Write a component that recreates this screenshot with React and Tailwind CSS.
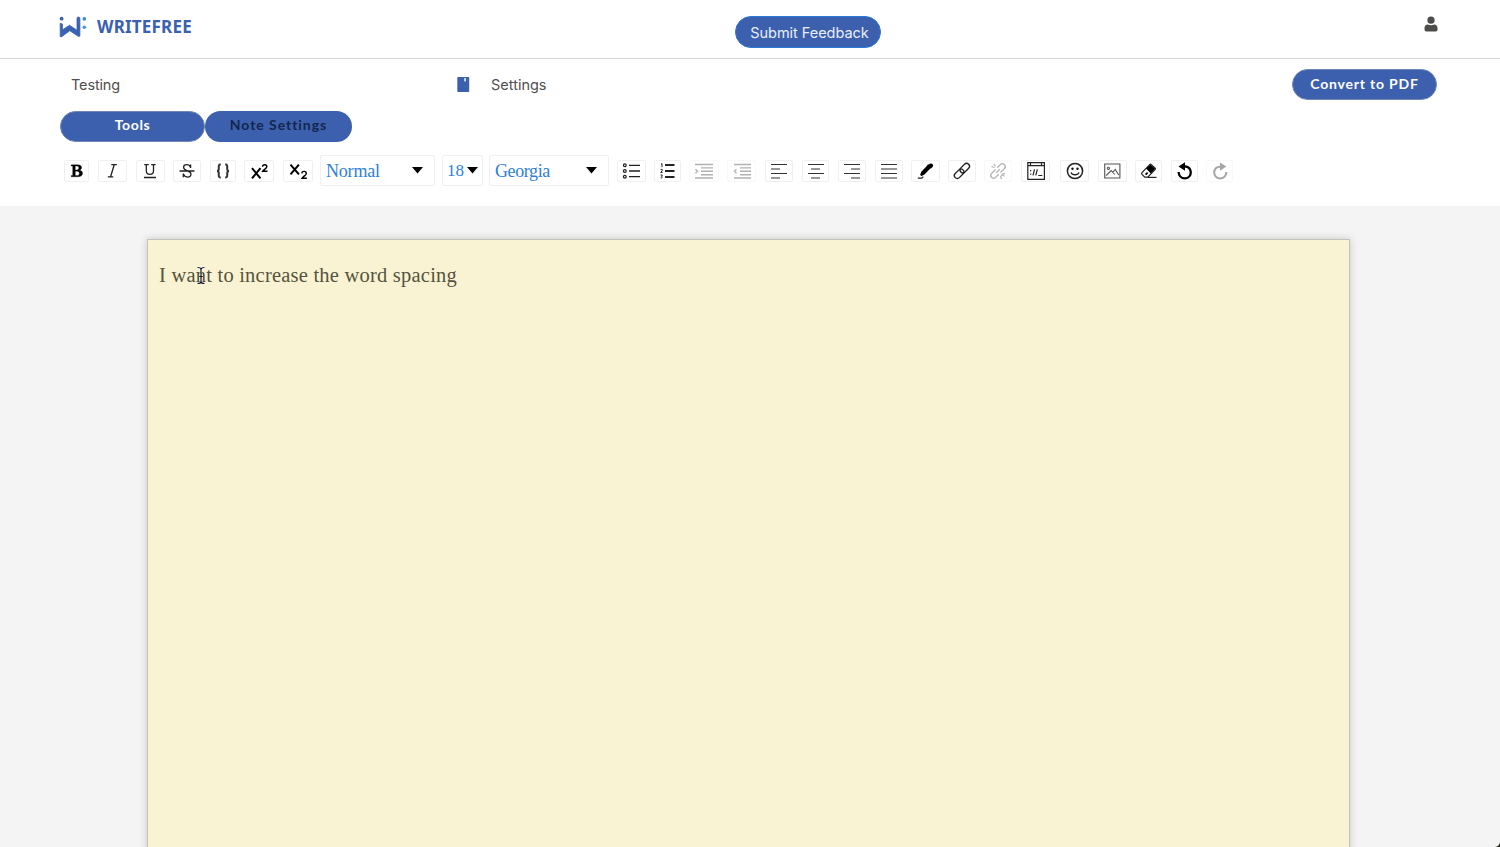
import React from "react";

function Icon({ w = 22, faded = false, children }) {
  return (
    <svg
      width={w}
      height="22"
      viewBox={`0 0 ${w} 22`}
      fill="none"
      stroke="#222"
      strokeWidth="1.2"
      className={faded ? "shrink-0 opacity-35" : "shrink-0"}
    >
      {children}
    </svg>
  );
}

function Tool({ className, label, faded = false, children }) {
  return (
    <button
      aria-label={label}
      className={`flex h-[22px] shrink-0 items-center justify-center rounded-xs border bg-white ${faded ? "border-[#f8f8f8]" : "border-[#f0f0f0]"} ${className}`}
    >
      {children}
    </button>
  );
}

function Select({ className, children }) {
  return (
    <button
      className={`flex h-[31px] shrink-0 items-center justify-between rounded-xs border border-[#f0f0f0] bg-white pl-[5px] font-['Liberation_Serif',serif] text-[18px] leading-none text-[#2f7fdb] ${className}`}
    >
      {children}
      <svg width="11" height="7" viewBox="0 0 11 7" className="shrink-0">
        <path d="M0 0h11L5.5 6.5z" fill="#000" />
      </svg>
    </button>
  );
}

function Logo() {
  return (
    <div className="flex h-[54px] items-center">
      <svg width="28" height="24" viewBox="0 0 28 24" fill="none">
        <circle cx="2.6" cy="3.7" r="1.9" fill="#3b5fae" />
        <path d="M1.200 8.200L3.400 9V14.800L10.600 10.300L18 15.200V3.500A1.200 1.200 0 0 1 20.900 3.500V20.500A1 1 0 0 1 19.200 21.300L10.800 15.700L3.200 21.300A1 1 0 0 1 1.200 20.500z" fill="#3b62b0" stroke="#3b62b0" strokeWidth=".8" strokeLinejoin="round" />
        <circle cx="25.3" cy="3.900" r="1.800" fill="#3d86d3" />
        <circle cx="25.3" cy="12.200" r="1.800" fill="#4a97dd" />
      </svg>
      <span className="-mt-px ml-[10px] font-['Noto_Sans',sans-serif] text-[17px] leading-none font-bold tracking-[0.200px] whitespace-nowrap text-[#3a60b0]">
        WRITEFREE
      </span>
    </div>
  );
}

const lines = {
  left: "M5 4.5h16M5 9h9M5 13.5h16M5 18h9",
  center: "M5 4.5h16M8 9h9M5 13.5h16M8 18h9",
  right: "M5 4.5h16M12 9h9M5 13.5h16M12 18h9",
  justify: "M5 4.5h16M5 9h16M5 13.5h16M5 18h16",
};

function Align({ kind }) {
  return (
    <Icon w={26}>
      <path d={lines[kind]} stroke="#333" />
    </Icon>
  );
}

function Toolbar() {
  return (
    <div className="flex h-[31px] items-center pl-16">
      <Tool label="Bold" className="w-[25px]">
        <Icon>
          <path d="M5.200 4.800h6.500c5 0 5 5 1.500 5.400c4.800.3 4.600 6.600-1 6.600H5.200v-1.200h1.500V6H5.200zM9.300 6v3.900h1.600c2.600 0 2.600-3.900 0-3.900zM9.300 11.200v4.400h1.800c3 0 3-4.400 0-4.400z" fill="#000" stroke="#000" strokeWidth=".3" fillRule="evenodd" />
        </Icon>
      </Tool>
      <Tool label="Italic" className="ml-[9px] w-[29px]">
        <Icon>
          <path d="M9.300 4.700h5.500M5.800 16.800h5.500M12.200 4.700L8.600 16.800" strokeWidth="1.300" />
        </Icon>
      </Tool>
      <Tool label="Underline" className="ml-[9px] w-[29px]">
        <Icon>
          <path d="M4.300 4.600h4.400M11.200 4.600h4.400M6.300 4.600v6.200c0 4.800 7.200 4.800 7.200 0V4.600M4 17.500h12" strokeWidth="1.300" />
        </Icon>
      </Tool>
      <Tool label="Strikethrough" className="ml-2 w-[28px]">
        <Icon>
          <path d="M14.600 8V4.600M14.400 7C13.400 3.800 7.600 3.600 7.600 7.300C7.600 9.600 10 10.200 11.500 10.800C13.600 11.500 15 12.200 15 14C15 18 8.500 18 7.500 14.200M7.300 17.200v-3.600M3.500 11h15" strokeWidth="1.300" />
        </Icon>
      </Tool>
      <Tool label="Monospace" className="ml-[9px] w-[26px]">
        <Icon>
          <path d="M8.800 4.600C6.200 4.300 6.800 6.500 6.800 8.500C6.800 10.200 6.300 11 5 11C6.300 11 6.800 11.800 6.800 13.500C6.800 15.500 6.200 17.700 8.800 17.400M13.200 4.600c2.600-.3 2 1.900 2 3.900c0 1.700.5 2.500 1.800 2.500c-1.300 0-1.800.8-1.800 2.500c0 2 .6 4.200-2 3.900" strokeWidth="2" stroke="#333" />
        </Icon>
      </Tool>
      <Tool label="Superscript" className="ml-2 w-[30px]">
        <Icon>
          <path d="M4 8.200l8.500 10.200M12.500 8.200L4 18.400" strokeWidth="2" stroke="#000" />
          <path d="M14.500 6.800c.2-2.800 4.300-2.600 4.300 0c0 1.800-2.900 2.700-4.200 4.500H19.500" strokeWidth="1.400" stroke="#000" />
        </Icon>
      </Tool>
      <Tool label="Subscript" className="ml-[9px] w-[30px]">
        <Icon>
          <path d="M3.500 4.600l8.400 9.800M11.900 4.600l-8.400 9.800" strokeWidth="2" stroke="#000" />
          <path d="M14.800 13.400c.2-2.800 4.500-2.600 4.500 0c0 1.800-3 2.900-4.300 4.900h4.900" strokeWidth="1.400" stroke="#000" />
        </Icon>
      </Tool>

      <Select className="ml-[7px] w-[115px] pr-[11px]"><span className="tracking-[-0.200px]">Normal</span></Select>
      <Select className="ml-[7px] w-[41px] pr-1"><span className="-ml-px text-[17px]">18</span></Select>
      <Select className="ml-[6px] w-[120px] pr-[11px]"><span className="tracking-[-0.400px]">Georgia</span></Select>

      <Tool label="Bulleted list" className="ml-2 w-[29px]">
        <Icon>
          <circle cx="3.800" cy="5.300" r="1.400" />
          <circle cx="3.800" cy="11" r="1.400" />
          <circle cx="3.800" cy="16.700" r="1.400" />
          <path d="M8 5.300h11M8 11h11M8 16.700h11" strokeWidth="1.300" />
        </Icon>
      </Tool>
      <Tool label="Numbered list" className="ml-2 w-[27px]">
        <Icon>
          <path d="M8 5h9.500M8 11h9.500M8 17h9.500" strokeWidth="1.800" />
          <path d="M4 4.200l1-.6v3.600M3.600 9.400h1.600v1.400l-1.600 1.600h2M3.600 15h1.700l-.8 1.400c1.400.2 1 2-.9 1.600" strokeWidth="1" />
        </Icon>
      </Tool>
      <Tool label="Indent" faded className="ml-2 w-[30px]">
        <Icon w={26} faded>
          <path d="M4 4.500h18M10 7.900h12M10 11.300h12M10 14.700h12M4 18h18M4.500 9.200l2 2l-2 2" strokeWidth="1.400" />
        </Icon>
      </Tool>
      <Tool label="Outdent" faded className="ml-[8px] mr-px w-[29px]">
        <Icon w={26} faded>
          <path d="M5 4.500h17M11 7.900h11M11 11.300h11M11 14.700h11M5 18h17M7.500 9.200l-2 2l2 2" strokeWidth="1.400" />
        </Icon>
      </Tool>
      <Tool label="Align left" className="ml-2 w-[28px]"><Align kind="left" /></Tool>
      <Tool label="Align center" className="ml-[9px] w-[27px]"><Align kind="center" /></Tool>
      <Tool label="Align right" className="ml-[9px] w-[28px]"><Align kind="right" /></Tool>
      <Tool label="Justify" className="ml-[9px] w-[28px]"><Align kind="justify" /></Tool>
      <Tool label="Text color" className="ml-2 w-[29px]">
        <Icon>
          <path d="M14.200 4.200c1.800-1.600 5 .2 3.700 2.400l-1.800 2l-.8-.2l-5.800 6.100l-3 1.500l-1.400-1.100l1.200-3.100l6-6.200v-.8z" fill="#000" stroke="none" />
          <path d="M2.800 18.200h4l1.500-1.600" strokeWidth="1.200" />
        </Icon>
      </Tool>
      <Tool label="Link" className="ml-2 w-[28px]">
        <Icon>
          <g transform="rotate(-45 11 11)" strokeWidth="1.300">
            <rect x="1.500" y="8" width="11" height="5.800" rx="2.900" />
            <rect x="9.500" y="8" width="11" height="5.800" rx="2.900" />
          </g>
        </Icon>
      </Tool>
      <Tool label="Remove link" faded className="ml-2 w-[28px]">
        <Icon faded>
          <g transform="rotate(-45 11 11)" strokeWidth="1.300">
            <path d="M10.300 8.200H4.800a2.800 2.800 0 0 0 0 5.600h4.500M12.700 8.200h4.500a2.800 2.800 0 0 1 0 5.600h-5.500M8.500 11h5" />
          </g>
          <path d="M4.500 6.500l3 1M7 4l1.500 2.500M14 15l3.500 1M13.500 16l1 3M15 13.800h3" />
        </Icon>
      </Tool>
      <Tool label="Embed" className="ml-[9px] w-[29px]">
        <Icon>
          <path d="M2.800 2.600h16.600v16.800H2.800zM2.800 5.600h16.600M5.500 2.600v3M16.500 2.600v3" strokeWidth="1.200" />
          <path d="M5.700 10v1.300M5.700 13.500v1.300M8 15.300l1.500-6M10.800 15.300l1.500-6M13.300 15.500h4" strokeWidth="1.200" />
        </Icon>
      </Tool>
      <Tool label="Emoji" className="ml-[10px] w-[29px]">
        <Icon>
          <circle cx="11" cy="11" r="7.600" strokeWidth="1.500" />
          <circle cx="8.500" cy="8.800" r="1.200" fill="#111" stroke="none" />
          <circle cx="13.500" cy="8.800" r="1.200" fill="#111" stroke="none" />
          <path d="M7 12.500c1.300 3 6.700 3 8 0" strokeWidth="1.300" />
        </Icon>
      </Tool>
      <Tool label="Image" className="ml-[9px] w-[29px]">
        <Icon>
          <g stroke="#555" strokeWidth="1.100">
            <path d="M2.700 4h15.200v14H2.700z" />
            <path d="M4.200 15.500l5-5l3.500 4M10.700 12.500l2.500-3l3.500 5.500" />
            <circle cx="6.400" cy="8.300" r="1.100" />
          </g>
        </Icon>
      </Tool>
      <Tool label="Clear formatting" className="ml-2 w-[27px]">
        <Icon>
          <path d="M4 12.600l7.700-8c.5-.5 1.200-.5 1.700 0l3.600 3.300c.6.500.6 1.200 0 1.700L9.800 17.200H6.800L4 14.400c-.5-.6-.5-1.200 0-1.800z" strokeWidth="1.200" />
          <path d="M8 8.600l4.500-4.200l4.700 4.400l-4.400 4.600zM7 14l2-2l1.200 1.200l-2 2z" fill="#000" stroke="none" />
          <path d="M9.800 17.400h8.700" strokeWidth="1.200" />
        </Icon>
      </Tool>
      <Tool label="Undo" className="ml-[9px] w-[27px]">
        <Icon>
          <path d="M10.500 6.500c8.200-.6 8.400 11.700.5 11.900c-3.900 0-6.300-2.900-6.400-6.400" strokeWidth="2.300" stroke="#000" />
          <path d="M11 2.300v8.400L4.500 6.500z" fill="#000" stroke="none" />
        </Icon>
      </Tool>
      <Tool label="Redo" faded className="ml-2 w-[27px]">
        <Icon faded>
          <path d="M11.500 6.700c-8.200-.6-8.400 11.500-.5 11.700c3.900 0 6.300-2.900 6.400-6.400" strokeWidth="2" stroke="#000" />
          <path d="M11 2.500v8.200l6.300-4.200z" fill="#000" stroke="none" />
        </Icon>
      </Tool>
    </div>
  );
}

export default function App() {
  return (
    <div className="relative flex h-[847px] w-[1500px] flex-col overflow-hidden bg-white font-[Inter,sans-serif] text-[#4f4f4f]">
      <header className="flex h-[59px] shrink-0 items-start border-b border-[#d6d6d6] pl-[59px]">
        <div className="w-[676px]"><Logo /></div>
        <button className="mt-4 flex h-8 w-[146px] items-center justify-center rounded-full border border-[#2c78dc] bg-[#3c60ad] pt-px pl-[3px] text-[14.500px] tracking-[-0.040px] whitespace-nowrap text-[#e8eefb]">
          Submit Feedback
        </button>
        <svg width="14" height="16" viewBox="0 0 14 16" className="mt-4 ml-[543px]" fill="#4c4c4a">
          <circle cx="7" cy="4.200" r="3.600" />
          <path d="M.5 12.800C.5 9.500 2.200 8.600 3.800 8.600c2 1 4.600 1 6.400 0c1.800 0 3.400 1 3.400 4.200c0 1.700-.6 2.600-2 2.600H2.400C1 15.400.5 14.500.5 12.800z" />
        </svg>
      </header>

      <div className="flex h-[52px] shrink-0 items-center pl-[71px] text-[14.500px]">
        <span className="w-[386px] tracking-[-0.150px]">Testing</span>
        <svg width="13" height="15" viewBox="0 0 13 15" className="mb-[2px]">
          <path d="M1 0h10.500a.7.7 0 0 1 .7.700V14.300a.7.7 0 0 1-.7.700H1a.7.7 0 0 1-.7-.7V.7A.7.7 0 0 1 1 0z" fill="#3c60ad" />
          <path d="M7.300 1h1.500v3.800l-.7-.8l-.8.8z" fill="#fff" />
        </svg>
        <span className="ml-[21px] w-[801px]">Settings</span>
        <button className="-mt-px flex h-[31px] w-[145px] items-center justify-center rounded-full border border-[#7386b5] bg-[#3c60ad] pb-[3px] font-[Lato,sans-serif] text-[14px] font-bold tracking-[0.800px] whitespace-nowrap text-white">
          Convert to PDF
        </button>
      </div>

      <div className="flex h-[31px] shrink-0 items-center pl-[60px] font-[Lato,sans-serif] text-[14px] font-bold">
        <button className="flex h-[31px] w-[145px] items-center justify-center rounded-full border border-[#7386b5] bg-[#3c60ad] pb-1 tracking-[0.600px] text-white">Tools</button>
        <button className="flex h-[31px] w-[147px] items-center justify-center rounded-full bg-[#3c60ad] pb-1 tracking-[0.950px] text-[#14264d]">Note Settings</button>
      </div>

      <div className="h-[64px] shrink-0 pt-[13px]"><Toolbar /></div>

      <main className="flex flex-1 bg-[#f4f4f4] pt-[33px] pl-[147px]">
        <div className="h-[640px] w-[1203px] shrink-0 border border-[#c3c3bb] bg-[#faf3d3] pt-[22px] pl-[11px] shadow-[0_0_8px_rgba(0,0,0,0.18)]">
          <div className="relative">
            <p className="font-['Liberation_Serif',serif] text-[20.500px] leading-[26px] tracking-[0.220px] whitespace-nowrap text-[#55533f]">
              I want to increase the word spacing
            </p>
            <svg width="10" height="19" viewBox="0 0 10 19" className="absolute top-[4px] left-[37px]" fill="none">
              <path d="M1.500 1.500C3.500 1.500 5 2 5 3.500C5 2 6.500 1.500 8.500 1.500M5 3.500v12M1.500 17.500C3.500 17.500 5 17 5 15.500C5 17 6.500 17.500 8.500 17.500M3.200 10.500h3.600" stroke="#fff" strokeWidth="2.600" opacity=".6" />
              <path d="M1.500 1.500C3.500 1.500 5 2 5 3.500C5 2 6.500 1.500 8.500 1.500M5 3.500v12M1.500 17.500C3.500 17.500 5 17 5 15.500C5 17 6.500 17.500 8.500 17.500M3.200 10.500h3.600" stroke="#111827" strokeWidth="1.200" />
            </svg>
          </div>
        </div>
      </main>
      <svg width="5" height="5" viewBox="0 0 5 5" className="absolute right-0 bottom-0">
        <path d="M5 0v5H0C3 4.500 4.500 3 5 0z" fill="#2c2c24" />
      </svg>
    </div>
  );
}
